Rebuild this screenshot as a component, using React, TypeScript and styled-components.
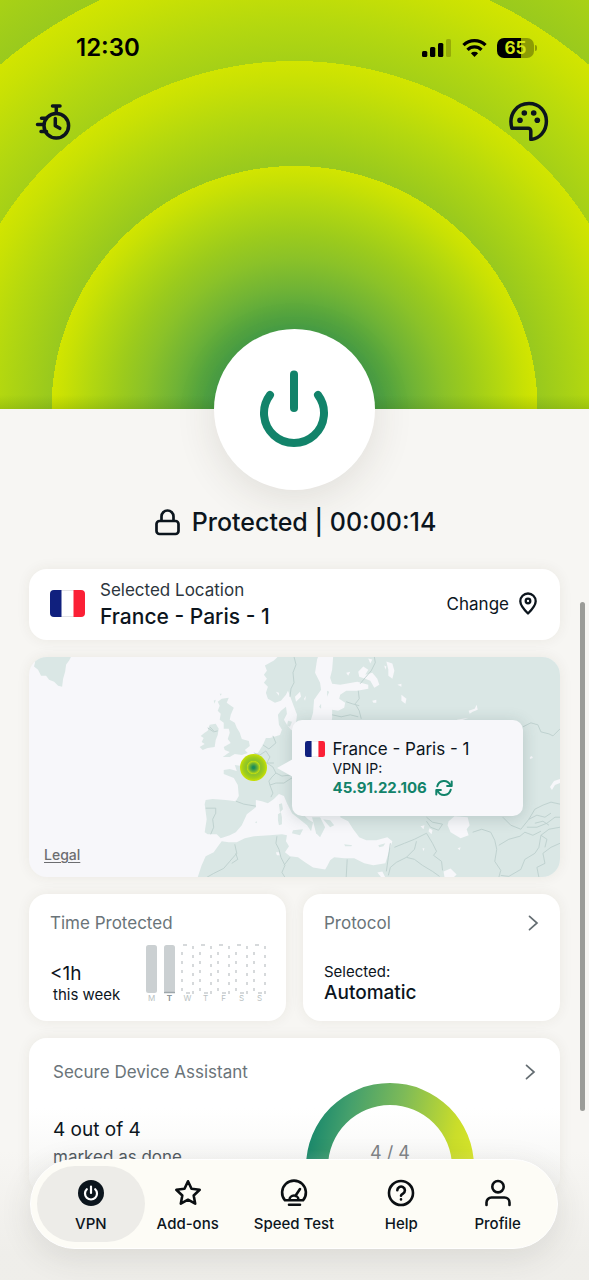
import React from 'react';
import styled, { createGlobalStyle } from 'styled-components';

const ink = '#0c151d';
const green = '#12836a';

const GlobalStyle = createGlobalStyle`
  *, *::before, *::after { box-sizing: border-box; }
  html, body { margin: 0; padding: 0; background: #f7f6f3; }
  body {
    font-family: Inter, "Liberation Sans", sans-serif;
    color: ${ink};
    -webkit-font-smoothing: antialiased;
  }
  button { font: inherit; color: inherit; border: 0; padding: 0; background: none; cursor: pointer; }
  a { color: inherit; }
  h1, h2, p { margin: 0; font-weight: 400; }
  svg { display: block; flex: none; }
`;

const Screen = styled.div`
  position: relative;
  display: flex;
  flex-direction: column;
  height: 100vh;
  overflow: hidden;
  background: #f7f6f3;
`;

const ScrollView = styled.main`
  flex: 1;
  min-height: 0;
  overflow-y: auto;
  scrollbar-width: none;
  &::-webkit-scrollbar { display: none; }
`;

const ringStops = `#12836a 0%, #3c9a4c 28%, #52a440 38%, #71b435 50%, #8bc228 62%,
  #9ccb1c 72%, #b4d80f 85%, #c9e104 95%, #d2e500 100%`;

const Hero = styled.header`
  display: flex;
  flex-direction: column;
  height: 409px;
  background:
    linear-gradient(to top, rgba(40, 90, 0, 0.16), rgba(40, 90, 0, 0) 14px),
    radial-gradient(circle 243px at 50% 100%, ${ringStops}, transparent 100%),
    radial-gradient(circle 348px at 50% 100%, ${ringStops}, transparent 100%),
    radial-gradient(circle 453px at 50% 100%, ${ringStops}, transparent 100%),
    radial-gradient(circle 640px at 50% 100%, ${ringStops});
`;

const StatusBar = styled.div`
  display: flex;
  justify-content: space-between;
  align-items: center;
  height: 28px;
  margin-top: 34px;
  padding: 0 55px 0 76px;
`;

const Clock = styled.time`
  font-size: 24px;
  line-height: 28px;
  font-weight: 600;
  color: #000;
`;

const StatusIcons = styled.div`
  display: flex;
  align-items: center;
  gap: 11px;
`;

const Battery = styled.div`
  position: relative;
  display: flex;
  align-items: center;
  justify-content: center;
  width: 37px;
  height: 20px;
  margin-left: -1px;
  border-radius: 7px;
  background: linear-gradient(to right, #000 65%, #8c9c04 65%);
  color: #d2e516;
  font-size: 17px;
  line-height: 20px;
  font-weight: 700;
  &::after {
    content: '';
    position: absolute;
    right: -3px;
    top: 7px;
    width: 2px;
    height: 6px;
    border-radius: 0 2px 2px 0;
    background: #8c9c04;
  }
`;

const Toolbar = styled.div`
  display: flex;
  justify-content: space-between;
  padding: 39px 40px 0 34px;
`;

const IconButton = styled.button`
  display: flex;
  align-items: center;
  height: 40px;
`;

const PowerButton = styled.button`
  position: relative;
  display: flex;
  align-items: center;
  justify-content: center;
  width: 161px;
  height: 161px;
  margin: -80px auto 0;
  padding: 0 2px 2px 0;
  border-radius: 50%;
  background: #fff;
  box-shadow: 0 8px 40px rgba(60, 50, 30, 0.12);
`;

const Status = styled.h1`
  display: flex;
  align-items: center;
  justify-content: center;
  gap: 12px;
  margin: 16px 0 30px;
  padding-left: 2px;
  font-size: 25px;
  line-height: 33px;
  font-weight: 500;
`;

const Stack = styled.div`
  display: flex;
  flex-direction: column;
  gap: 17px;
  padding: 0 29px 90px;
`;

const Card = styled.section`
  border-radius: 18px;
  background: #fff;
  box-shadow: 0 0 14px rgba(70, 60, 30, 0.07);
`;

const LocationCard = styled(Card)`
  display: flex;
  align-items: center;
  height: 71px;
  padding: 0 23px 2px 21px;
`;

const LocationText = styled.div`
  flex: 1;
  margin-left: 15px;
`;

const Caption = styled.p`
  font-size: 17px;
  line-height: 26px;
  color: #2c353d;
`;

const Place = styled.p`
  font-size: 21px;
  line-height: 28px;
  font-weight: 500;
`;

const ChangeButton = styled.button`
  display: flex;
  align-items: center;
  gap: 10px;
  font-size: 17px;
  line-height: 24px;
`;

const MapCard = styled(Card)`
  position: relative;
  height: 220px;
  overflow: hidden;
  background: #f7f7fa;
`;

const MapArt = styled.svg`
  width: 100%;
  height: 100%;
`;

const Marker = styled.div`
  position: absolute;
  left: calc(50% - 55px);
  top: 97px;
  width: 27px;
  height: 27px;
  border-radius: 50%;
  background:
    radial-gradient(circle 7px at center, #1c8c58 15%, #6fb436 60%, #c0dd10 90%, transparent 100%),
    radial-gradient(circle at center, #8fc428 42%, #a4cf18 56%, #c9e104 70%);
`;

const Callout = styled.div`
  position: absolute;
  left: calc(50% - 3px);
  top: 63px;
  display: grid;
  grid-template-columns: 20px auto;
  column-gap: 8px;
  align-content: start;
  align-items: center;
  width: 231px;
  height: 96px;
  padding: 17px 13px;
  border-radius: 10px;
  background: #f7f7fa;
  box-shadow: 0 2px 16px rgba(40, 70, 70, 0.2);
  &::before {
    content: '';
    position: absolute;
    left: -15px;
    top: 39px;
    border-style: solid;
    border-color: transparent #f7f7fa transparent transparent;
    border-width: 9px 16px 9px 0;
  }
`;

const CalloutTitle = styled.p`
  font-size: 17px;
  line-height: 24px;
`;

const CalloutLabel = styled.p`
  grid-column: 2;
  font-size: 14px;
  line-height: 16px;
`;

const CalloutIp = styled.p`
  grid-column: 2;
  display: flex;
  align-items: center;
  gap: 8px;
  font-size: 15px;
  line-height: 22px;
  font-weight: 700;
  color: ${green};
`;

const LegalLink = styled.a`
  position: absolute;
  left: 15px;
  bottom: 13px;
  font-size: 14px;
  line-height: 18px;
  font-weight: 500;
  color: #6c6d70;
  text-underline-offset: 2px;
`;

const Pair = styled.div`
  display: grid;
  grid-template-columns: 1fr 1fr;
  gap: 17px;
`;

const InfoCard = styled(Card)`
  display: flex;
  flex-direction: column;
  height: 127px;
  padding: 16px 21px 14px;
`;

const CardHead = styled.div`
  display: flex;
  justify-content: space-between;
  align-items: center;
`;

const CardTitle = styled.h2`
  font-size: 17px;
  line-height: 26px;
  color: #6a7479;
`;

const TimeBody = styled.div`
  display: flex;
  justify-content: space-between;
  margin-top: 8px;
`;

const Hours = styled.p`
  margin-top: 19px;
  font-size: 19px;
  line-height: 22px;
`;

const Small = styled.p<{ $indent?: boolean }>`
  padding-left: ${(p) => (p.$indent ? '3px' : '0')};
  font-size: 15px;
  line-height: 20px;
`;

const Week = styled.div`
  display: flex;
  gap: 7px;
  margin-right: -2px;
  padding-right: 2px;
`;

const Day = styled.div<{ $today?: boolean }>`
  display: flex;
  flex-direction: column;
  align-items: center;
  width: 11px;
  font-size: 8px;
  line-height: 8px;
  font-weight: ${(p) => (p.$today ? 700 : 400)};
  color: ${(p) => (p.$today ? '#8d979c' : '#b9bfc2')};
`;

const ProtocolBody = styled.div`
  margin-top: 26px;
`;

const ProtocolValue = styled.p`
  font-size: 19px;
  line-height: 21px;
  font-weight: 500;
`;

const AssistantCard = styled(Card)`
  height: 156px;
  padding: 21px 24px 0;
  background: linear-gradient(to bottom, #fff 45%, #f4f4f2 100%);
`;

const AssistantBody = styled.div`
  display: flex;
  justify-content: space-between;
  padding-right: 62px;
`;

const DoneCount = styled.p`
  margin-top: 31px;
  font-size: 19px;
  line-height: 28px;
`;

const DoneLabel = styled.p`
  font-size: 17px;
  line-height: 26px;
  color: #4b545b;
`;

const Donut = styled.div`
  display: flex;
  align-items: flex-end;
  justify-content: center;
  height: 84px;
  margin-top: -2px;
`;

const DonutValue = styled.span`
  position: absolute;
  padding-bottom: 2px;
  font-size: 18px;
  line-height: 24px;
  color: #7c8084;
`;

const ScrollThumb = styled.div`
  position: absolute;
  right: 4px;
  top: 47%;
  bottom: 169px;
  width: 5px;
  border-radius: 3px;
  background: #9b9c98;
`;

const BottomShade = styled.div`
  position: absolute;
  inset: auto 0 0;
  height: 130px;
  background: linear-gradient(to bottom, rgba(238, 237, 233, 0), rgba(238, 237, 233, 0.9) 80%);
  pointer-events: none;
`;

const TabBar = styled.nav`
  position: absolute;
  left: 30px;
  right: 31px;
  bottom: 31px;
  display: grid;
  grid-template-columns: 108fr 86fr 127fr 88fr 105fr;
  height: 90px;
  padding: 6px 7px 6px 6px;
  border: 1px solid #fff;
  border-radius: 45px;
  background: #fdfcf6;
  box-shadow: 0 8px 32px rgba(60, 60, 50, 0.12);
`;

const Tab = styled.button<{ $active?: boolean }>`
  display: flex;
  flex-direction: column;
  align-items: center;
  gap: 8px;
  padding-top: 13px;
  border-radius: 39px;
  background: ${(p) => (p.$active ? '#edece8' : 'none')};
  font-size: 15px;
  line-height: 18px;
  font-weight: 500;
  white-space: nowrap;
`;

const Flag = ({ w, h }: { w: number; h: number }) => (
  <svg width={w} height={h} viewBox="0 0 35 27" preserveAspectRatio="none" role="img" aria-label="France">
    <rect x="0.5" y="0.5" width="34" height="26" rx="4" fill="#fff" stroke="#e3e3e6" />
    <path d="M4 0h7.500v27H4a4 4 0 0 1-4-4V4a4 4 0 0 1 4-4z" fill="#10207e" />
    <path d="M31 0h-7.500v27H31a4 4 0 0 0 4-4V4a4 4 0 0 0-4-4z" fill="#fb2036" />
  </svg>
);

const Chevron = () => (
  <svg width="11" height="16" viewBox="0 0 11 16" fill="none" stroke="#646d72" strokeWidth="1.7" strokeLinecap="round">
    <path d="M1.500 1.300 9 8l-7.500 6.700" />
  </svg>
);

const WorldMap = () => (
  <MapArt viewBox="0 0 529 220" preserveAspectRatio="xMidYMid slice" aria-hidden="true">
    <g fill="#dae7e5">
      <path d="M3 0H42L40 4 37 8 36 15 34 22 33 30 29 29 25 25 20 23 17 19 12 19 9 13 5 10 6 6z" />
      <path d="M192 42 199 41 197 46 204 51 201 58 200 63 205 66 207 71 210 76 212 82 219 84 220 89 215 93 218 96 212 98 205 97 200 100 193 100 200 95 195 93 194 90 201 86 198 82 200 76 199 72 194 72 194 66 190 63 191 57 188 54 190 49 188 45z" />
      <path d="M180 68 186 67 189 72 188 78 186 83 185 90 178 91 173 93 170 90 175 87 172 85 174 81 171 79 175 76 178 74z" />
      <path d="M248 0 244 4 235 9 237 14 234 18 237 22 234 26 238 30 236 36 238 42 245 46 251 44 256 38 258 34 261 42 264 50 267 58 266 66 266 78 274 78 280 66 283 56 284 43 291 33 290 26 285 16 287 3 288 0z" />
      <path d="M529 0V220H168L172 208 176 199 184 195 189 188 192 184 199 185 207 185 215 181 224 179 240 178 252 177 257 178 256 184 259 189 255 195 260 199 268 200 275 205 283 210 295 212 297 209 300 203 304 200 314 201 324 201 334 206 343 208 355 206 360 190 362 184 357 180 346 183 336 183 329 180 323 172 318 164 310 160 312 150 300 140 290 135 275 132 266 126 264 128 266 142 272 156 278 162 283 165 281 174 277 168 272 164 262 156 257 146 254 139 249 137 244 142 238 146 232 144 226 143 226 150 217 157 212 168 206 175 200 178 191 181 187 177 183 177 178 177 175 175 177 162 175 147 176 143 183 142 196 143 206 144 209 139 208 128 204 121 194 117 194 113 200 112 207 114 205 108 212 109 217 103 228 96 233 88 236 81 240 81 250 78 252 73 249 68 248 58 251 54 256 50 257 57 254 63 257 68 261 73 275 80 290 76 300 74 302 61 302 53 308 54 314 51 315 46 309 42 310 38 316 34 327 34 338 32 338 28 327 25 310 28 302 27 300 21 302 13 303 0z" />
      <path d="M282 160 290 160 295 170 290 180 286 176z" />
      <path d="M293 162 300 163 304 168 300 170z" />
      <path d="M248 157l3-2 1 5 0 7-3 1-1-5z M249 147l3-1 1 6-3 3z M263 173l10-1-3 6-8-2z M225 165l2-1v2z M184 44l2-1-1 4z M190 37l2 0-1 2z" />
      <path d="M314 187l8 1-1 1-6 0z M348 188l7-2-2 3-4 1z M297 34l2 1-2 5z M289 50l2-3 0 5z M258 64l4 1-2 5-3-1z" />
    </g>
    <g fill="#f7f7fa">
      <path d="M328 15 333 10 338 13 335 18 342 16 347 22 349 28 344 31 340 24 335 22 329 20z" />
      <path d="M356 5l6 2 2 7-2 8-4-3 0-6z M371 38l5 4-1 5-4-3z M367 28l4-1 0 3z M342 44l4-1 0 3-3 0z M354 9l2 1-1 3z M338 2l4 1-2 4z M316 16l4-1-2 4z M265 40l5-5 1 5-5 5z M274 42l2-3-1 5z" />
      <path d="M438 54l6-2 2-4 1 5-5 2-3 2z M438 61l-12 2 4 1z M499 100l2-1 1 2-3 1z" />
      <path d="M418 164 424 159 437 160 439 168 436 172 438 178 430 181 420 175 417 168z" />
      <path d="M519 130 523 124 529 122V126L524 128 521 133z" />
      <path d="M390 169l4-1-1 4z M399 171l3 2-1 4-3-3z M392 191l2 0-1 3z M427 191l3-1-1 3z M413 214 420 211 426 217 423 220H414z M347 215l5-1 3 6h-4z M246 195l3 0 1 3-3 0z M249 36l-3-1 3 4z" />
      <path d="M330 116 345 110 370 108 400 125 405 140 380 146 350 142 335 135z" />
    </g>
    <g fill="none" stroke="#bccfcd" strokeWidth="0.9" strokeLinejoin="round">
      <path d="M264 0 266 8 263 16 264 26 261 32 260 40" />
      <path d="M344 0 345 6 341 14 335 21 330 27" />
      <path d="M328 34 329 42 325 47 329 54 331 62" />
      <path d="M316 45 322 47 329 49 M302 58 311 60 320 58 328 60" />
      <path d="M224 96 230 98 236 94 240 100 237 106 243 110 246 116 M233 88 239 92 246 86 243 79 M236 106 244 106 M246 116 242 120 239 124 240 128 246 126 254 126 260 122 264 120 M240 128 243 136 241 140 M246 116 252 119 261 118" />
      <path d="M206 144 214 147 220 148 226 149 M176 151 186 151 186 156 183 162 184 170 181 177" />
      <path d="M205 187 207 196 200 204 194 211 184 216 177 220 M206 196 208 202 202 206" />
      <path d="M247 179 246 186 249 192 251 200 255 208 252 215 255 220 M260 200 254 208 M317 202 316 220" />
      <path d="M492 70 500 66 507 68 510 75 518 77 522 79 529 72" />
      <path d="M396 160 402 165 412 167 408 173 400 170 396 164 M442 175 451 172 460 175 464 183 466 192 464 204 470 213 468 220" />
      <path d="M364 190 374 186 384 182 396 176 402 186 406 194 403 198 411 204 412 213 M376 200 384 202 392 208 402 214 409 219 M358 218 360 210 366 205 376 200 384 192 386 184 M360 186 358 200 356 214" />
      <path d="M468 188 478 182 489 179 494 175 502 178 510 174 M470 218 478 219 490 212 494 202 504 196 508 190 510 178 518 172 529 170 M506 210 514 206 512 196 520 190 529 186 M506 210 508 220" />
      <path d="M472 160 480 168 490 172 498 162 504 152 512 148 520 145 529 147 M498 162 506 158 514 160 520 156 M504 166 512 164 518 168 M496 170 506 170 516 166 524 160 529 160 M510 178 516 182 514 190" />
      <path d="M178 71 184 75 188 74 M180 70 184 74" />
    </g>
  </MapArt>
);

const FilledBar = ({ today }: { today?: boolean }) => (
  <svg width="13" height="50" viewBox="0 0 13 50" aria-hidden="true">
    <rect x="1" y="1" width="11" height="48" rx="2.500" fill="#cbd0d2" />
    {today && <path d="M1 48.500h11" stroke="#9da6aa" strokeWidth="1.500" />}
  </svg>
);

const EmptyBar = () => (
  <svg width="13" height="50" viewBox="0 0 13 50" fill="none" stroke="#c9cdcf" strokeWidth="1.500" aria-hidden="true">
    <path d="M1 8v42" strokeDasharray="3 6" />
    <path d="M12 2v48" strokeDasharray="3 6" />
    <path d="M2 1h4M5 49h4" />
  </svg>
);

const days: { label: string; filled?: boolean; today?: boolean }[] = [
  { label: 'M', filled: true },
  { label: 'T', filled: true, today: true },
  { label: 'W' },
  { label: 'T' },
  { label: 'F' },
  { label: 'S' },
  { label: 'S' },
];

const lineIcon = {
  width: 28,
  height: 28,
  viewBox: '0 0 28 28',
  fill: 'none',
  stroke: '#0b0f12',
  strokeWidth: 2.6,
  strokeLinecap: 'round' as const,
  strokeLinejoin: 'round' as const,
  'aria-hidden': true,
};

const tabs: { label: string; active?: boolean; icon: React.ReactNode }[] = [
  {
    label: 'VPN',
    active: true,
    icon: (
      <svg {...lineIcon}>
        <circle cx="14" cy="14" r="13" fill={ink} stroke="none" />
        <path d="M14 7.500v6.500M9.800 10.200a6 6 0 1 0 8.400 0" stroke="#fff" strokeWidth="2.200" />
      </svg>
    ),
  },
  {
    label: 'Add-ons',
    icon: (
      <svg {...lineIcon}>
        <path d="M14 2.300l3.500 7.500 8.200 1-6 5.700 1.500 8.200-7.200-4-7.200 4 1.500-8.200-6-5.700 8.200-1z" />
      </svg>
    ),
  },
  {
    label: 'Speed Test',
    icon: (
      <svg {...lineIcon}>
        <path d="M5 21.300A11.900 11.900 0 1 1 23 21.300zM9.500 21a4.500 4.500 0 0 1 9 0M15.300 17 20 10M9 25.800h11" />
      </svg>
    ),
  },
  {
    label: 'Help',
    icon: (
      <svg {...lineIcon}>
        <circle cx="14" cy="14" r="12" />
        <path d="M10.300 11.300a3.800 3.800 0 1 1 5.700 3.300c-1.200.700-2 1.200-2 2.200M14 20.300v.100" />
      </svg>
    ),
  },
  {
    label: 'Profile',
    icon: (
      <svg {...lineIcon}>
        <circle cx="14" cy="7.700" r="5.700" />
        <path d="M2.500 26v-2.500a5 5 0 0 1 5-5h13a5 5 0 0 1 5 5V26" />
      </svg>
    ),
  },
];

export default function App() {
  return (
    <Screen>
      <GlobalStyle />
      <ScrollView>
        <Hero>
          <StatusBar>
            <Clock>12:30</Clock>
            <StatusIcons>
              <svg width="29" height="18" viewBox="0 0 29 18" aria-hidden="true">
                <rect x="0" y="12" width="5.300" height="6" rx="1.500" />
                <rect x="8" y="8" width="5.300" height="10" rx="1.500" />
                <rect x="16" y="4" width="5.300" height="14" rx="1.500" />
                <rect x="24" y="0" width="5" height="18" rx="1.500" fill="#8c9c04" opacity="0.75" />
              </svg>
              <svg width="25" height="18" viewBox="0 0 25 18" fill="none" stroke="#000" strokeWidth="3.300" aria-hidden="true">
                <path d="M1.500 6.200a15.600 15.600 0 0 1 22 0M5.500 10.800a9.900 9.900 0 0 1 14 0" />
                <path d="M12.500 18l-3.600-3.800a5.200 5.200 0 0 1 7.200 0z" fill="#000" stroke="none" />
              </svg>
              <Battery>65</Battery>
            </StatusIcons>
          </StatusBar>
          <Toolbar>
            <IconButton aria-label="Connection timer">
              <svg width="37" height="37" viewBox="0 0 37 37" fill="none" stroke={ink} strokeWidth="3.500" strokeLinecap="round" strokeLinejoin="round">
                <circle cx="22.300" cy="22.700" r="12.300" />
                <path d="M18.500 3h7.500M22.300 3.500V10M21.300 15.500v7.200l4.500 2.600M7.500 15.300H12M3.500 21.500h6M7 28.500h5.500" />
              </svg>
            </IconButton>
            <IconButton aria-label="Appearance">
              <svg width="40" height="40" viewBox="0 0 40 40" fill="none" stroke={ink} strokeWidth="3.500" strokeLinejoin="round">
                <path d="M2.900 27.300C-1 13 8 2.600 20 2.600c10.500 0 17.400 8 17.400 17.600 0 10-7 17.500-15.600 18.200V30a2.700 2.700 0 0 0-2.700-2.700z" />
                <g fill={ink} stroke="none">
                  <circle cx="15.300" cy="12" r="2.800" />
                  <circle cx="24.700" cy="12" r="2.800" />
                  <circle cx="11" cy="19.300" r="2.800" />
                  <circle cx="28.300" cy="19.300" r="2.800" />
                </g>
              </svg>
            </IconButton>
          </Toolbar>
        </Hero>

        <PowerButton aria-label="Disconnect">
          <svg width="70" height="78" viewBox="0 0 70 78" fill="none" stroke={green} strokeWidth="8" strokeLinecap="round">
            <path d="M35 4.500V38" />
            <path d="M11 25a30 30 0 1 0 48 0" />
          </svg>
        </PowerButton>

        <Status>
          <svg width="25" height="27" viewBox="0 0 25 27" fill="none" stroke={ink} strokeWidth="2.700" aria-hidden="true">
            <rect x="1.500" y="12" width="22" height="13" rx="3" />
            <path d="M6.500 12V7.500a6 6 0 0 1 12 0V12" />
          </svg>
          <span>Protected | 00:00:14</span>
        </Status>

        <Stack>
          <LocationCard>
            <Flag w={35} h={27} />
            <LocationText>
              <Caption>Selected Location</Caption>
              <Place>France - Paris - 1</Place>
            </LocationText>
            <ChangeButton>
              Change
              <svg width="18" height="23" viewBox="0 0 18 23" fill="none" stroke={ink} strokeWidth="2.300" strokeLinejoin="round" aria-hidden="true">
                <path d="M9 21.500c-3-3-7.700-7.700-7.700-12.300a7.700 7.700 0 0 1 15.400 0c0 4.600-4.700 9.300-7.700 12.300z" />
                <circle cx="9" cy="9" r="2.300" />
              </svg>
            </ChangeButton>
          </LocationCard>

          <MapCard>
            <WorldMap />
            <Marker />
            <Callout>
              <Flag w={20} h={16} />
              <CalloutTitle>France - Paris - 1</CalloutTitle>
              <CalloutLabel>VPN IP:</CalloutLabel>
              <CalloutIp>
                45.91.22.106
                <svg width="18" height="16" viewBox="0 0 18 16" fill="none" stroke={green} strokeWidth="2" strokeLinecap="round" strokeLinejoin="round" aria-hidden="true">
                  <path d="M2.300 6.300A6.900 6.900 0 0 1 15.300 5.200M16.700 1.500V6h-4.600" />
                  <path d="M15.700 9.700A6.900 6.900 0 0 1 2.700 10.800M1.300 14.500V10h4.600" />
                </svg>
              </CalloutIp>
            </Callout>
            <LegalLink href="#legal">Legal</LegalLink>
          </MapCard>

          <Pair>
            <InfoCard>
              <CardTitle>Time Protected</CardTitle>
              <TimeBody>
                <div>
                  <Hours>&lt;1h</Hours>
                  <Small $indent>this week</Small>
                </div>
                <Week>
                  {days.map((d, i) => (
                    <Day key={i} $today={d.today}>
                      {d.filled ? <FilledBar today={d.today} /> : <EmptyBar />}
                      {d.label}
                    </Day>
                  ))}
                </Week>
              </TimeBody>
            </InfoCard>
            <InfoCard>
              <CardHead>
                <CardTitle>Protocol</CardTitle>
                <Chevron />
              </CardHead>
              <ProtocolBody>
                <Small>Selected:</Small>
                <ProtocolValue>Automatic</ProtocolValue>
              </ProtocolBody>
            </InfoCard>
          </Pair>

          <AssistantCard>
            <CardHead>
              <CardTitle>Secure Device Assistant</CardTitle>
              <Chevron />
            </CardHead>
            <AssistantBody>
              <div>
                <DoneCount>4 out of 4</DoneCount>
                <DoneLabel>marked as done</DoneLabel>
              </div>
              <Donut>
                <svg width="168" height="84" viewBox="0 0 168 84" aria-hidden="true">
                  <defs>
                    <linearGradient id="progress" x1="0" y1="0.900" x2="1" y2="1">
                      <stop offset="0" stopColor="#1c8a6c" />
                      <stop offset="0.200" stopColor="#45a06c" />
                      <stop offset="0.500" stopColor="#7dba58" />
                      <stop offset="0.850" stopColor="#cadd2a" />
                      <stop offset="1" stopColor="#d8e62a" />
                    </linearGradient>
                  </defs>
                  <path d="M0 84a84 84 0 0 1 168 0h-22a62 62 0 0 0-124 0z" fill="url(#progress)" />
                </svg>
                <DonutValue>4 / 4</DonutValue>
              </Donut>
            </AssistantBody>
          </AssistantCard>
        </Stack>
      </ScrollView>

      <BottomShade />
      <ScrollThumb />
      <TabBar aria-label="Main">
        {tabs.map((t) => (
          <Tab key={t.label} $active={t.active} aria-current={t.active ? 'page' : undefined}>
            {t.icon}
            {t.label}
          </Tab>
        ))}
      </TabBar>
    </Screen>
  );
}
